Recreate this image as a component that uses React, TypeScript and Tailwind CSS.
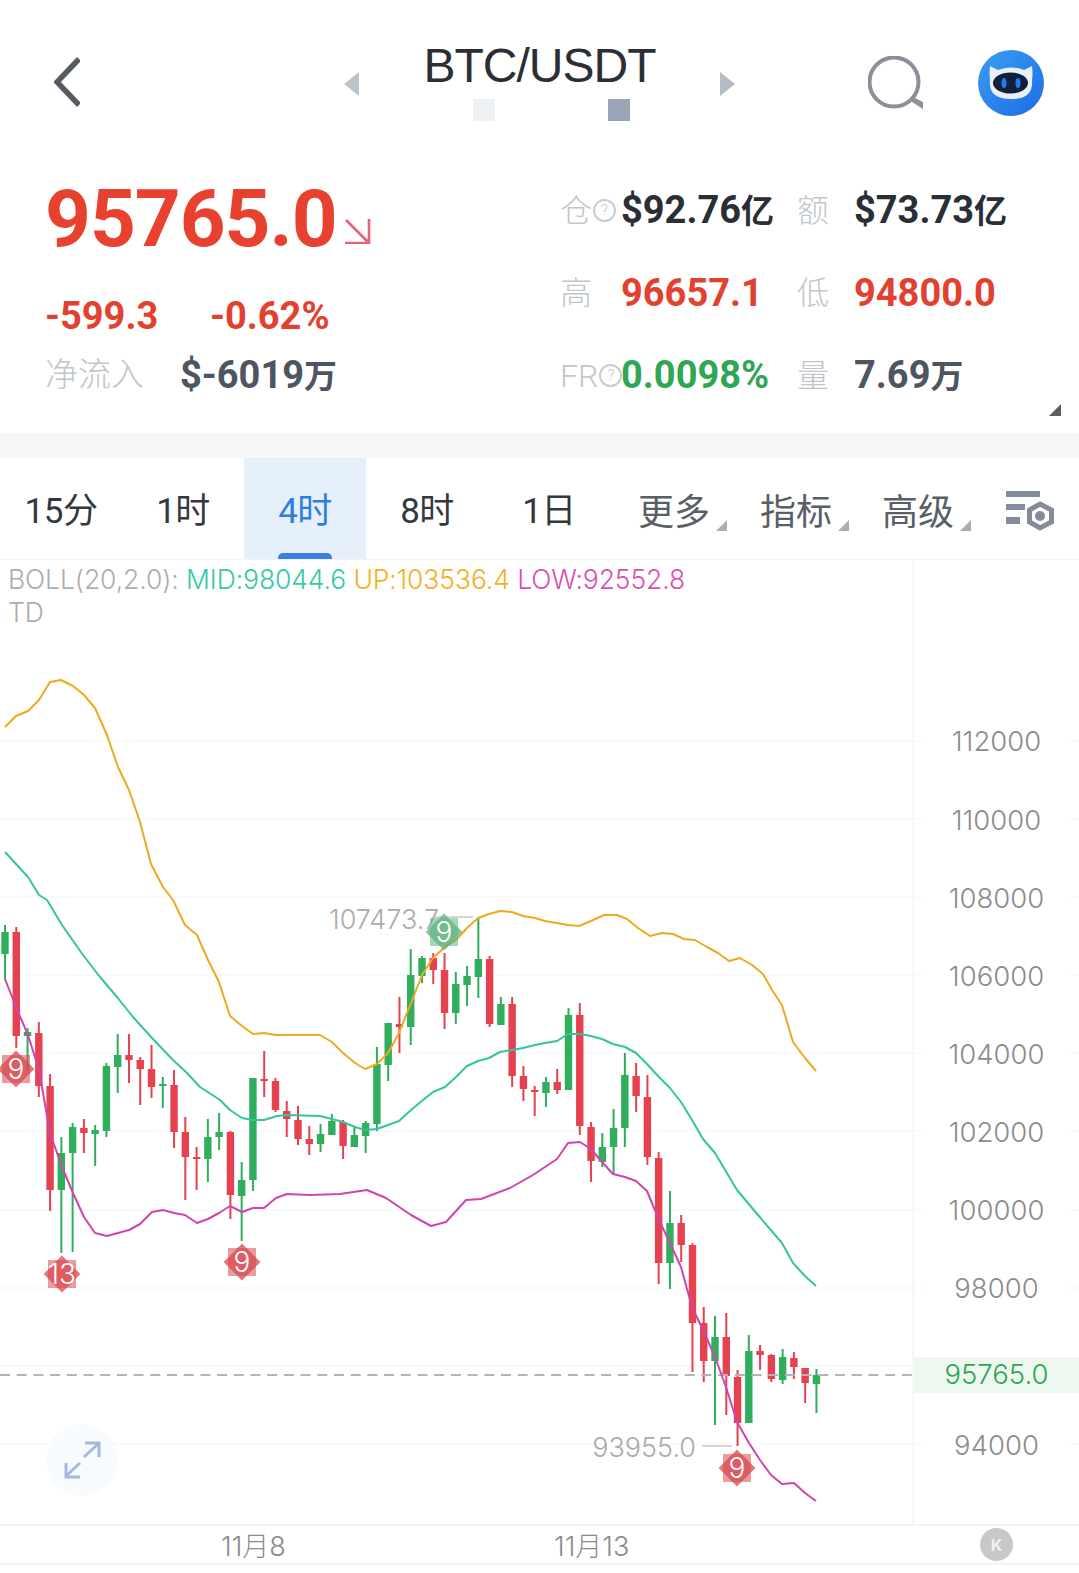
const sans = "font-['Roboto','Noto_Sans_CJK_SC',sans-serif]";

// [up, high, bodyTop, bodyBottom, low] in page pixels, read off the chart
const candles: [number, number, number, number, number][] = [
  [1, 925, 932, 954, 980], [0, 927, 932, 1036, 1048], [1, 1028, 1032, 1036, 1070], [0, 1022, 1033, 1086, 1097],
  [0, 1074, 1086, 1190, 1211], [1, 1137, 1153, 1190, 1253], [1, 1123, 1127, 1153, 1252], [0, 1119, 1128, 1133, 1153],
  [1, 1125, 1130, 1134, 1166], [1, 1063, 1066, 1131, 1137], [1, 1034, 1055, 1067, 1093], [0, 1034, 1055, 1060, 1083],
  [0, 1057, 1060, 1069, 1105], [0, 1045, 1069, 1087, 1098], [1, 1077, 1084, 1086, 1108], [0, 1070, 1085, 1132, 1148],
  [0, 1117, 1132, 1157, 1200], [0, 1147, 1157, 1159, 1190], [1, 1119, 1137, 1159, 1182], [1, 1113, 1132, 1137, 1150],
  [0, 1131, 1132, 1195, 1219], [1, 1162, 1180, 1196, 1241], [1, 1078, 1078, 1180, 1191], [0, 1051, 1079, 1080, 1097],
  [0, 1078, 1081, 1110, 1112], [0, 1101, 1111, 1119, 1137], [0, 1106, 1120, 1139, 1145], [0, 1126, 1139, 1144, 1155],
  [1, 1124, 1134, 1144, 1152], [1, 1114, 1121, 1135, 1135], [0, 1120, 1122, 1146, 1159], [1, 1127, 1135, 1147, 1147],
  [1, 1121, 1123, 1136, 1153], [1, 1047, 1064, 1124, 1131], [1, 1023, 1023, 1065, 1081], [0, 997, 1024, 1027, 1053],
  [1, 949, 975, 1027, 1045], [1, 956, 958, 976, 983], [0, 953, 958, 970, 984], [0, 953, 970, 1013, 1029],
  [1, 972, 984, 1013, 1024], [1, 966, 976, 985, 1006], [1, 918, 959, 977, 998], [0, 956, 959, 1024, 1027],
  [1, 997, 1004, 1025, 1025], [0, 997, 1004, 1076, 1087], [0, 1066, 1076, 1089, 1101], [0, 1086, 1090, 1092, 1116],
  [1, 1077, 1082, 1093, 1107], [0, 1069, 1082, 1090, 1094], [1, 1008, 1015, 1090, 1090], [0, 1003, 1015, 1126, 1135],
  [0, 1122, 1127, 1161, 1182], [1, 1133, 1147, 1162, 1167], [1, 1109, 1128, 1147, 1174], [1, 1053, 1075, 1128, 1147],
  [0, 1063, 1076, 1096, 1112], [0, 1075, 1097, 1157, 1165], [0, 1152, 1158, 1263, 1284], [1, 1191, 1223, 1263, 1289],
  [0, 1215, 1223, 1245, 1262], [0, 1243, 1245, 1323, 1372], [0, 1307, 1323, 1361, 1382], [1, 1316, 1337, 1361, 1425],
  [0, 1313, 1337, 1376, 1415], [0, 1370, 1377, 1423, 1446], [1, 1335, 1351, 1423, 1423], [0, 1345, 1351, 1355, 1370],
  [0, 1354, 1355, 1379, 1382], [1, 1349, 1357, 1380, 1384], [0, 1352, 1358, 1367, 1379], [0, 1368, 1368, 1383, 1403],
  [1, 1369, 1375, 1384, 1413],
];

const upper =
  '5,727 16,716 28,711 39,700 50,682 61,680 73,686 84,695 95,708 107,735 118,767 129,790 140,822 151,864 163,887 173,900 185,925 197,935 208,960 219,982 230,1016 242,1026 253,1034 264,1033 276,1035 320,1035 332,1042 343,1053 355,1063 365,1069 377,1064 388,1053 399,1033 411,1003 422,975 433,958 445,947 456,940 467,928 478,918 489,914 500,911 512,912 523,916 535,918 545,921 557,923 568,925 579,926 591,921 604,915 617,915 627,919 638,928 650,936 662,933 673,934 684,939 695,940 707,947 718,953 729,961 740,958 752,965 763,974 772,990 782,1005 793,1042 805,1058 816,1071';
const middle =
  '5,852 16,864 28,877 39,895 47,900 62,925 83,955 100,977 117,997 133,1017 152,1038 173,1060 187,1073 200,1087 220,1100 230,1110 242,1118 253,1120 264,1120 277,1116 287,1115 320,1116 332,1119 343,1122 355,1127 365,1130 377,1129 388,1125 399,1121 411,1110 423,1100 433,1092 445,1087 456,1077 467,1066 478,1061 489,1058 500,1052 512,1050 523,1048 535,1045 545,1043 557,1041 568,1034 580,1034 591,1036 602,1039 613,1044 625,1047 636,1053 647,1064 659,1077 670,1088 681,1102 692,1120 703,1139 715,1153 737,1190 758,1215 782,1243 793,1263 805,1276 816,1286';
const lower =
  '5,979 16,1007 28,1035 39,1070 50,1133 62,1167 73,1193 84,1217 95,1233 107,1236 118,1233 129,1230 140,1224 152,1212 163,1210 174,1213 185,1215 197,1223 208,1219 219,1213 230,1206 242,1212 253,1208 264,1208 276,1198 287,1194 310,1195 340,1194 367,1190 386,1198 411,1215 431,1226 446,1222 466,1200 481,1199 510,1188 533,1175 557,1159 568,1143 580,1142 591,1149 602,1162 613,1174 625,1177 636,1181 647,1191 659,1220 670,1243 681,1267 692,1307 704,1332 715,1357 726,1387 737,1422 749,1443 760,1460 771,1475 782,1484 794,1483 805,1493 816,1501';

const gridYs = [741, 819, 897, 975, 1053, 1131, 1210, 1288, 1366, 1444];
const axisLabels = ['112000', '110000', '108000', '106000', '104000', '102000', '100000', '98000', '96000', '94000'];

function Badge({ x, y, label, color }: { x: number; y: number; label: string; color: string }) {
  return (
    <g>
      <rect x={x - 14} y={y - 14} width={28} height={28} fill={color} opacity={0.55} />
      <rect x={x - 13} y={y - 13} width={26} height={26} fill={color} opacity={0.75} transform={`rotate(45 ${x} ${y})`} />
      <text x={x} y={y + 10} textAnchor="middle" fill="#fff" fontSize={28} fontFamily="Inter, sans-serif" fontWeight={300}>
        {label}
      </text>
    </g>
  );
}

function Chart() {
  return (
    <svg className="absolute left-0 top-0" width={1079} height={964} viewBox="0 560 1079 964">
      {gridYs.map((y) => (
        <g key={y} stroke="#f4f5f7" strokeWidth={1}>
          <line x1={0} x2={924} y1={y} y2={y} />
          <line x1={1068} x2={1079} y1={y} y2={y} />
        </g>
      ))}
      {candles.map(([up, high, top, bottom, low], i) => {
        const x = 5 + 11.27 * i;
        const color = up ? '#2fae5c' : '#e5414f';
        return (
          <g key={i} fill={color}>
            <rect x={x - 1} y={high} width={2} height={low - high} />
            <rect x={x - 3.7} y={top} width={7.4} height={Math.max(bottom - top, 2)} />
          </g>
        );
      })}
      <line x1={0} x2={912} y1={1375} y2={1375} stroke="#b4b4b4" strokeWidth={2} strokeDasharray="10 6.7" />
      <polyline points={upper} fill="none" stroke="#eeaa1f" strokeWidth={2} strokeLinejoin="round" />
      <polyline points={middle} fill="none" stroke="#35c4a2" strokeWidth={2} strokeLinejoin="round" />
      <polyline points={lower} fill="none" stroke="#cf45ad" strokeWidth={2} strokeLinejoin="round" />
      <line x1={435} x2={473} y1={917} y2={917} stroke="#c8c8c8" strokeWidth={1.5} />
      <line x1={702} x2={732} y1={1446} y2={1446} stroke="#c8c8c8" strokeWidth={1.5} />
      <text x={329} y={929} fill="#ababab" fontSize={27} fontFamily="Inter, sans-serif" fontWeight={300}>
        107473.7
      </text>
      <text x={696} y={1457} textAnchor="end" fill="#ababab" fontSize={27} fontFamily="Inter, sans-serif" fontWeight={300}>
        93955.0
      </text>
      <Badge x={444} y={932} label="9" color="#5fb37e" />
      <Badge x={16} y={1069} label="9" color="#d9484f" />
      <Badge x={62} y={1274} label="13" color="#d9484f" />
      <Badge x={242} y={1262} label="9" color="#d9484f" />
      <Badge x={737} y={1468} label="9" color="#d9484f" />
    </svg>
  );
}

function Avatar() {
  return (
    <svg width={66} height={66} viewBox="0 0 66 66">
      <defs>
        <linearGradient id="av" x1="0" y1="0" x2="1" y2="1">
          <stop offset="0" stopColor="#3a9ff2" />
          <stop offset="1" stopColor="#1d6be6" />
        </linearGradient>
      </defs>
      <circle cx={33} cy={33} r={33} fill="url(#av)" />
      <path d="M12 16 L20 20 Q33 15 46 20 L54 16 Q55 24 54 30 Q56 49 33 49 Q10 49 12 30 Q11 24 12 16 Z" fill="#e9f0f8" />
      <ellipse cx={32.5} cy={33} rx={17.5} ry={10.5} fill="#12203a" />
      <ellipse cx={26} cy={33} rx={2.5} ry={5} fill="#1f7cf0" />
      <ellipse cx={40} cy={33} rx={2.5} ry={5} fill="#1f7cf0" />
    </svg>
  );
}

function Header() {
  return (
    <div className="relative flex h-[160px] items-start">
      <svg className="ml-[54px] mt-[57px]" width={26} height={50} viewBox="0 0 26 50">
        <path d="M25 2 L3 25 L25 48" fill="none" stroke="#555b63" strokeWidth={5.5} />
      </svg>
      <svg className="ml-[264px] mt-[72px]" width={15} height={24} viewBox="0 0 15 24">
        <path d="M15 0 L0 12 L15 24 Z" fill="#bcc3ca" />
      </svg>
      <div className="ml-[64px] flex w-[233px] flex-col items-center">
        <div className="mt-[38px] h-[56px] font-['Liberation_Sans',sans-serif] text-[48px] leading-[56px] tracking-[-1px] text-[#2b2e33]">
          BTC/USDT
        </div>
        <div className="ml-[24px] mt-[5px] flex w-[157px] justify-between">
          <span className="h-[22px] w-[22px] bg-[#eef1f4]" />
          <span className="h-[22px] w-[22px] bg-[#9aa6b8]" />
        </div>
      </div>
      <svg className="ml-[64px] mt-[72px]" width={15} height={24} viewBox="0 0 15 24">
        <path d="M0 0 L15 12 L0 24 Z" fill="#b4bcc4" />
      </svg>
      <svg className="ml-[133px] mt-[56px]" width={55} height={55} viewBox="0 0 55 55">
        <circle cx={26} cy={26} r={24.5} fill="none" stroke="#8a9099" strokeWidth={4} />
        <path d="M45 41 L55 46 V53 L41 44 Z" fill="#8a9099" />
      </svg>
      <div className="ml-[55px] mt-[50px]">
        <Avatar />
      </div>
    </div>
  );
}

function Help({ className }: { className: string }) {
  return (
    <span className={`flex h-[23px] w-[23px] items-center justify-center rounded-full border-2 border-[#c8cdd2] text-[15px] leading-none text-[#c0c6cc] ${className}`}>
      ?
    </span>
  );
}

function Stat({ label, value, color, help, unit, wide }: { label: string; value: string; color: string; help?: boolean; unit?: string; wide?: boolean }) {
  return (
    <div className={`flex items-center ${wide ? 'w-[237px]' : 'w-[223px]'}`}>
      <div className={`flex items-center text-[32px] font-light text-[#c0c6cc] ${wide ? 'w-[61px]' : 'w-[57px]'}`}>
        {label}
        {help && <Help className="ml-px shrink-0" />}
      </div>
      <div className={`whitespace-nowrap text-[38px] font-bold ${color}`}>
        {value}
        {unit && <span className="text-[33px]">{unit}</span>}
      </div>
    </div>
  );
}

function Stats() {
  return (
    <div className={`relative flex h-[273px] ${sans}`}>
      <div className="ml-[45px] w-[515px]">
        <div className="mt-[12px] flex h-[94px] items-start">
          <span className="text-[80px] font-bold leading-[94px] tracking-[-1px] text-[#e8412f]">95765.0</span>
          <svg className="ml-[8px] mt-[46px]" width={26} height={26} viewBox="0 0 26 26">
            <path d="M1 2 L24 25 M24 1 V25 H0" fill="none" stroke="#e8627a" strokeWidth={2.6} />
          </svg>
        </div>
        <div className="mt-[27px] flex h-[46px] items-center text-[38px] font-bold text-[#e2412f]">
          <span className="w-[165px]">-599.3</span>
          <span>-0.62%</span>
        </div>
        <div className="mt-[13px] flex h-[46px] items-center">
          <span className="w-[135px] text-[33px] font-light text-[#c0c6cc]">净流入</span>
          <span className="text-[38px] font-bold text-[#4e5560]">
            $-6019<span className="text-[33px]">万</span>
          </span>
        </div>
      </div>
      <div className="flex flex-col pt-[22px]">
        {[0, 1, 2].map((row) => (
          <div key={row} className="flex h-[82.5px] items-start">
            {row === 0 && (
              <>
                <Stat wide label="仓" help value="$92.76" unit="亿" color="text-[#2a2e35]" />
                <Stat label="额" value="$73.73" unit="亿" color="text-[#2a2e35]" />
              </>
            )}
            {row === 1 && (
              <>
                <Stat wide label="高" value="96657.1" color="text-[#e2412f]" />
                <Stat label="低" value="94800.0" color="text-[#e2412f]" />
              </>
            )}
            {row === 2 && (
              <>
                <Stat wide label="FR" help value="0.0098%" color="text-[#2fa654]" />
                <Stat label="量" value="7.69" unit="万" color="text-[#4e5560]" />
              </>
            )}
          </div>
        ))}
      </div>
      <span className="absolute left-[1049px] top-[244px] h-0 w-0 border-b-[12px] border-l-[12px] border-b-[#5a5f66] border-l-transparent" />
    </div>
  );
}

function Tabs() {
  const tabs = ['15分', '1时', '4时', '8时', '1日'];
  const menus = ['更多', '指标', '高级'];
  return (
    <div className={`flex h-[102px] border-b border-[#f1f3f5] ${sans}`}>
      {tabs.map((tab) => (
        <div
          key={tab}
          className={`relative flex w-[122px] items-center justify-center pt-[8px] text-[35px] tracking-[-0.5px] ${tab === '4时' ? 'bg-[#e6f0fb] text-[#2f7de1]' : 'text-[#33383f]'}`}
        >
          {tab}
          {tab === '4时' && <span className="absolute bottom-0 left-[34px] h-[6px] w-[54px] rounded-t-[5px] bg-[#3b7fe0]" />}
        </div>
      ))}
      {menus.map((menu) => (
        <div key={menu} className="relative flex w-[122px] items-center justify-center pl-[6px] pt-[8px] text-[36px] text-[#5a5f66]">
          {menu}
          <span className="absolute left-[106px] top-[62px] h-0 w-0 border-b-[11px] border-l-[11px] border-b-[#aaaeb2] border-l-transparent" />
        </div>
      ))}
      <svg className="ml-[30px] mt-[33px]" width={50} height={42} viewBox="0 0 50 42">
        <g fill="#868b9c">
          <rect x={0} y={0} width={34} height={6} />
          <rect x={0} y={13} width={19} height={6} />
          <rect x={0} y={26} width={14} height={7} />
        </g>
        <path d="M34 13 L45.5 19 V31 L34 37 L23.5 31 V19 Z" fill="none" stroke="#868b9c" strokeWidth={5} />
        <circle cx={34} cy={25} r={5} fill="#868b9c" />
      </svg>
    </div>
  );
}

function App() {
  return (
    <div className="relative h-[1573px] w-[1079px] overflow-hidden bg-white font-['Inter','Noto_Sans_CJK_SC',sans-serif]">
      <Header />
      <Stats />
      <div className="h-[25px] bg-[#f5f7f9]" />
      <Tabs />
      <div className="flex h-[964px]">
        <div className="relative w-[912px] shrink-0">
          <Chart />
          <div className="relative pl-[8px] pt-[3px] text-[26.5px] font-light leading-[33px] tracking-[-0.1px] text-[#adadad]">
            <div className="whitespace-nowrap">
              BOLL(20,2.0): <span className="text-[#35c9a5]">MID:98044.6</span> <span className="text-[#f5b01e]">UP:103536.4</span>{' '}
              <span className="text-[#d94fb3]">LOW:92552.8</span>
            </div>
            <div>TD</div>
          </div>
          <div className="absolute left-[46px] top-[864px] flex h-[72px] w-[72px] items-center justify-center rounded-full bg-[#f8fbfe]">
            <svg width={38} height={38} viewBox="0 0 38 38" fill="none" stroke="#a3b9e0" strokeWidth={3}>
              <path d="M21 16 L35 3 M22 2 H36 V16" />
              <path d="M17 22 L3 35 M3 22 V36 H17" />
            </svg>
          </div>
        </div>
        <div className="relative flex flex-1 flex-col items-center border-l-2 border-[#f6f7f8] pt-[143px] text-[27.5px] font-light text-[#8c8c8c]">
          {axisLabels.map((label) => (
            <div key={label} className="flex h-[78.15px] shrink-0 items-center">
              {label}
            </div>
          ))}
          <div className="absolute left-0 right-0 top-[797px] flex h-[36px] items-center justify-center bg-[#edf8f1] text-[#2fa654]">
            95765.0
          </div>
        </div>
      </div>
      <div className="relative h-[41px] border-y-2 border-[#f1f3f5] text-[27px] font-light text-[#8c8c8c]">
        <span className="absolute left-[221px] top-[1px]">11月8</span>
        <span className="absolute left-[554px] top-[1px]">11月13</span>
        <span className="absolute left-[980px] top-[2px] flex h-[33px] w-[33px] items-center justify-center rounded-full bg-[#c8c8c8] text-[16px] font-bold text-[#f0f0f0]">
          K
        </span>
      </div>
    </div>
  );
}

export default App;
